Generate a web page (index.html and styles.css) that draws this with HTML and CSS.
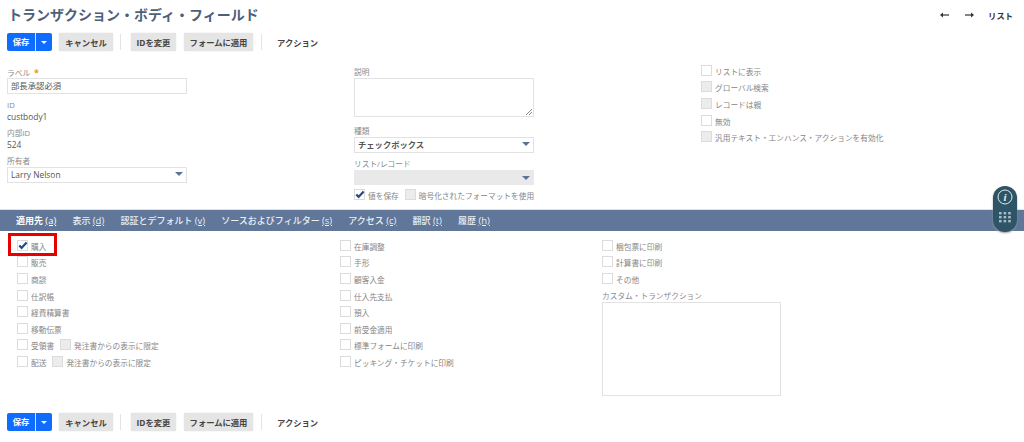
FILE: index.html
```html
<!DOCTYPE html>
<html lang="ja">
<head>
<meta charset="utf-8">
<title>トランザクション・ボディ・フィールド</title>
<link rel="stylesheet" href="styles.css">
</head>
<body>
<header class="head">
  <h1 class="title">トランザクション・ボディ・フィールド</h1>
  <nav class="pager">
    <svg class="arrow" viewBox="0 0 9 6" width="9" height="6"><path d="M9 3H2" stroke="#333" stroke-width="1.2"/><path d="M0 3 3 .4V5.6Z" fill="#333"/></svg>
    <svg class="arrow arrow-next" viewBox="0 0 9 6" width="9" height="6"><path d="M0 3H7" stroke="#333" stroke-width="1.2"/><path d="M9 3 6 .4V5.6Z" fill="#333"/></svg>
    <span class="pager-list">リスト</span>
  </nav>
</header>
<div class="toolbar">
  <div class="save"><span class="save-main">保存</span><span class="save-drop"><i class="caret-white"></i></span></div>
  <button class="btn btn-cancel">キャンセル</button>
  <span class="sep"></span>
  <button class="btn btn-id">IDを変更</button>
  <button class="btn btn-form">フォームに適用</button>
  <span class="sep sep-2"></span>
  <span class="action">アクション</span>
</div>
<main class="form">
  <section class="col col-a">
    <label class="lab">ラベル <span class="req">*</span></label>
    <div class="field">部長承認必須</div>
    <label class="lab lab-gap">ID</label>
    <div class="val">custbody1</div>
    <label class="lab lab-gap">内部ID</label>
    <div class="val">524</div>
    <label class="lab lab-gap">所有者</label>
    <div class="field">Larry Nelson<i class="caret"></i></div>
  </section>
  <section class="col col-b">
    <label class="lab">説明</label>
    <div class="area"><svg class="grip" viewBox="0 0 8 8" width="8" height="8"><path d="M7 1 1 7M7 4 4 7" stroke="#888" stroke-width="1" fill="none"/></svg></div>
    <label class="lab lab-type">種類</label>
    <div class="field field-type">チェックボックス<i class="caret"></i></div>
    <label class="lab lab-gap">リスト/レコード</label>
    <div class="field field-dis"><i class="caret"></i></div>
    <div class="inline-checks">
      <span class="cb"><svg viewBox="0 0 12 12"><path d="M2.5 6 5 8.6 10.5 2.6" fill="none" stroke="#234a87" stroke-width="2.4"/></svg></span><span class="cb-text">値を保存</span>
      <span class="cb dis cb-gap"></span><span class="cb-text">暗号化されたフォーマットを使用</span>
    </div>
  </section>
  <section class="col col-c">
    <div class="row"><span class="cb"></span><span class="cb-text">リストに表示</span></div>
    <div class="row"><span class="cb dis"></span><span class="cb-text">グローバル検索</span></div>
    <div class="row"><span class="cb dis"></span><span class="cb-text">レコードは親</span></div>
    <div class="row"><span class="cb"></span><span class="cb-text">無効</span></div>
    <div class="row"><span class="cb dis"></span><span class="cb-text">汎用テキスト・エンハンス・アクションを有効化</span></div>
  </section>
</main>
<nav class="tabs">
  <span class="tab active">適用先 <u>(a)</u></span>
  <span class="tab">表示 <u>(d)</u></span>
  <span class="tab">認証とデフォルト <u>(v)</u></span>
  <span class="tab">ソースおよびフィルター <u>(s)</u></span>
  <span class="tab">アクセス <u>(c)</u></span>
  <span class="tab">翻訳 <u>(t)</u></span>
  <span class="tab">履歴 <u>(h)</u></span>
</nav>
<section class="apply">
  <div class="acol acol-1">
    <div class="row highlighted"><span class="cb"><svg viewBox="0 0 12 12"><path d="M2.5 6 5 8.6 10.5 2.6" fill="none" stroke="#234a87" stroke-width="2.4"/></svg></span><span class="cb-text">購入</span></div>
    <div class="row"><span class="cb"></span><span class="cb-text">販売</span></div>
    <div class="row"><span class="cb"></span><span class="cb-text">商談</span></div>
    <div class="row"><span class="cb"></span><span class="cb-text">仕訳帳</span></div>
    <div class="row"><span class="cb"></span><span class="cb-text">経費精算書</span></div>
    <div class="row"><span class="cb"></span><span class="cb-text">移動伝票</span></div>
    <div class="row"><span class="cb"></span><span class="cb-text">受領書</span><span class="cb dis cb-gap"></span><span class="cb-text">発注書からの表示に限定</span></div>
    <div class="row"><span class="cb"></span><span class="cb-text">配送</span><span class="cb dis cb-gap"></span><span class="cb-text">発注書からの表示に限定</span></div>
  </div>
  <div class="acol acol-2">
    <div class="row"><span class="cb"></span><span class="cb-text">在庫調整</span></div>
    <div class="row"><span class="cb"></span><span class="cb-text">手形</span></div>
    <div class="row"><span class="cb"></span><span class="cb-text">顧客入金</span></div>
    <div class="row"><span class="cb"></span><span class="cb-text">仕入先支払</span></div>
    <div class="row"><span class="cb"></span><span class="cb-text">預入</span></div>
    <div class="row"><span class="cb"></span><span class="cb-text">前受金適用</span></div>
    <div class="row"><span class="cb"></span><span class="cb-text">標準フォームに印刷</span></div>
    <div class="row"><span class="cb"></span><span class="cb-text">ピッキング・チケットに印刷</span></div>
  </div>
  <div class="acol acol-3">
    <div class="row"><span class="cb"></span><span class="cb-text">梱包票に印刷</span></div>
    <div class="row"><span class="cb"></span><span class="cb-text">計算書に印刷</span></div>
    <div class="row"><span class="cb"></span><span class="cb-text">その他</span></div>
    <label class="lab lab-custom">カスタム・トランザクション</label>
    <div class="listbox"></div>
  </div>
</section>
<div class="toolbar">
  <div class="save"><span class="save-main">保存</span><span class="save-drop"><i class="caret-white"></i></span></div>
  <button class="btn btn-cancel">キャンセル</button>
  <span class="sep"></span>
  <button class="btn btn-id">IDを変更</button>
  <button class="btn btn-form">フォームに適用</button>
  <span class="sep sep-2"></span>
  <span class="action">アクション</span>
</div>
<aside class="widget">
  <svg class="w-info" viewBox="0 0 16 16" width="16" height="16"><circle cx="8" cy="8" r="7" fill="none" stroke="#e6edf0" stroke-width="1"/><text x="8" y="12" text-anchor="middle" class="w-i">i</text></svg>
  <svg class="w-dots" viewBox="0 0 14 12" width="14" height="12"><g fill="#a9bcc6"><rect x="1" y="1" width="2.6" height="2.4"/><rect x="5.6" y="1" width="2.6" height="2.4"/><rect x="10.2" y="1" width="2.6" height="2.4"/><rect x="1" y="5" width="2.6" height="2.4"/><rect x="5.6" y="5" width="2.6" height="2.4"/><rect x="10.2" y="5" width="2.6" height="2.4"/><rect x="1" y="9" width="2.6" height="2.4"/><rect x="5.6" y="9" width="2.6" height="2.4"/><rect x="10.2" y="9" width="2.6" height="2.4"/></g></svg>
</aside>
</body>
</html>
```
FILE: styles.css
```css
*, *::before, *::after { box-sizing: border-box; }
html, body { margin: 0; padding: 0; }
body {
  width: 1024px; height: 442px; overflow: hidden; position: relative; background: #fff;
  font-family: "Open Sans", "Noto Sans CJK JP", sans-serif; font-size: 8.4px; color: #5f5f5f;
}
.head { height: 33px; display: flex; justify-content: space-between; align-items: center; padding: 0 11px 3px 8px; }
.title { margin: 0; font-size: 14px; line-height: 20px; font-weight: 700; color: #4d5f79; }
.pager { display: flex; align-items: center; font-weight: 700; font-size: 8.3px; color: #333; }
.arrow { display: block; }
.arrow-next { margin-left: 16px; }
.pager-list { margin-left: 14px; }
.toolbar { height: 18px; display: flex; align-items: center; padding-left: 7px; }
.save { width: 45px; height: 18px; background: #0f6cff; border-radius: 2px; display: flex; color: #fff; font-weight: 700; font-size: 8.3px; }
.save-main { width: 29px; text-align: center; line-height: 18px; border-right: 1px solid #cfe0ff; }
.save-drop { flex: 1; display: flex; align-items: center; justify-content: center; }
.caret-white { border: 3.5px solid transparent; border-top: 3.5px solid #fff; border-bottom: 0; }
.btn { height: 18px; margin: 0; padding: 0; border: 0; border-radius: 2px; background: #e5e5e5; box-shadow: 0 0 1px #bbb; color: #444; font: 700 8.3px "Open Sans", "Noto Sans CJK JP", sans-serif; }
.btn-cancel { width: 54px; margin-left: 7px; }
.btn-id { width: 45px; }
.btn-form { width: 69px; margin-left: 8px; }
.sep { width: 1px; height: 16px; background: #e4e4e4; margin: 0 10px 0 7px; }
.sep-2 { margin: 0 15px 0 8px; }
.action { font-weight: 700; color: #444; font-size: 8.3px; }
.form { height: 158px; display: flex; padding-top: 16px; }
.col { display: flex; flex-direction: column; }
.col-a { width: 180px; margin-left: 7px; }
.col-b { width: 180px; margin-left: 167px; }
.col-c { margin-left: 167px; margin-top: -8px; }
.lab { display: block; color: #8a8a8a; font-size: 7.7px; line-height: 11px; height: 11px; white-space: nowrap; }
.req { color: #e69a1e; font-size: 9px; font-weight: 700; margin-left: 2px; }
.lab-gap { margin-top: 6px; }
.field { border: 1px solid #e2e2e2; height: 16px; line-height: 14px; padding-left: 3px; color: #555; position: relative; }
.val { line-height: 11px; height: 11px; color: #555; }
.caret { position: absolute; right: 3px; top: 4px; border: 4px solid transparent; border-top: 4.5px solid #5a7399; border-bottom: 0; }
.area { height: 39px; border: 1px solid #e2e2e2; position: relative; }
.grip { position: absolute; right: 0; bottom: 0; }
.lab-type { margin-top: 9px; }
.field-type { font-weight: 700; font-size: 8.3px; color: #555; }
.field-dis { background: #e9e9e9; border-color: #e9e9e9; height: 15px; }
.field-dis .caret { top: 5px; }
.inline-checks { display: flex; align-items: flex-end; margin-top: 4px; height: 11px; white-space: nowrap; }
.cb { flex: none; display: block; width: 11px; height: 11px; border: 1px solid #dcdcdc; background: #fff; }
.cb svg { display: block; width: 11px; height: 11px; margin: -1px; }
.cb.dis { background: #ececec; }
.cb-text { color: #858585; font-size: 7.7px; line-height: 11px; margin-left: 3px; position: relative; top: 2px; white-space: nowrap; }
.cb-gap { margin-left: 6px; }
.row { display: flex; align-items: flex-end; height: 16.65px; }
.tabs { height: 22px; background: #607799; display: flex; align-items: center; padding-left: 16px; color: #e9eef5; font-size: 9px; font-weight: 500; border-top: 1px solid #dfe3e8; }
.tab { margin-right: 16.2px; white-space: nowrap; position: relative; }
.tab u { font-weight: 400; font-size: 9.5px; }
.active { color: #fff; font-weight: 700; }
.active::after { content: ""; position: absolute; left: 17px; bottom: -6px; border: 3px solid transparent; border-bottom: 3px solid #fff; border-top: 0; }
.apply { height: 182px; display: flex; padding-top: 3px; }
.acol { display: flex; flex-direction: column; }
.acol-1 { width: 323px; margin-left: 17px; }
.acol-2 { width: 262px; }
.acol-3 { width: 180px; }
.highlighted { position: relative; }
.highlighted::before { content: ""; position: absolute; left: -9px; top: -1px; width: 49px; height: 23px; border: 3px solid #e60000; }
.lab-custom { margin-top: 7px; }
.listbox { width: 179px; height: 94px; border: 1px solid #e2e2e2; }
.widget { position: absolute; left: 993px; top: 186px; width: 24px; height: 46px; border-radius: 12px; background: #2d5467; display: flex; flex-direction: column; align-items: center; padding-top: 3px; box-shadow: 0 1px 2px #999; }
.w-i { font: italic 700 11px "Liberation Serif", serif; fill: #e6edf0; }
.w-dots { margin-top: 6px; }
```
